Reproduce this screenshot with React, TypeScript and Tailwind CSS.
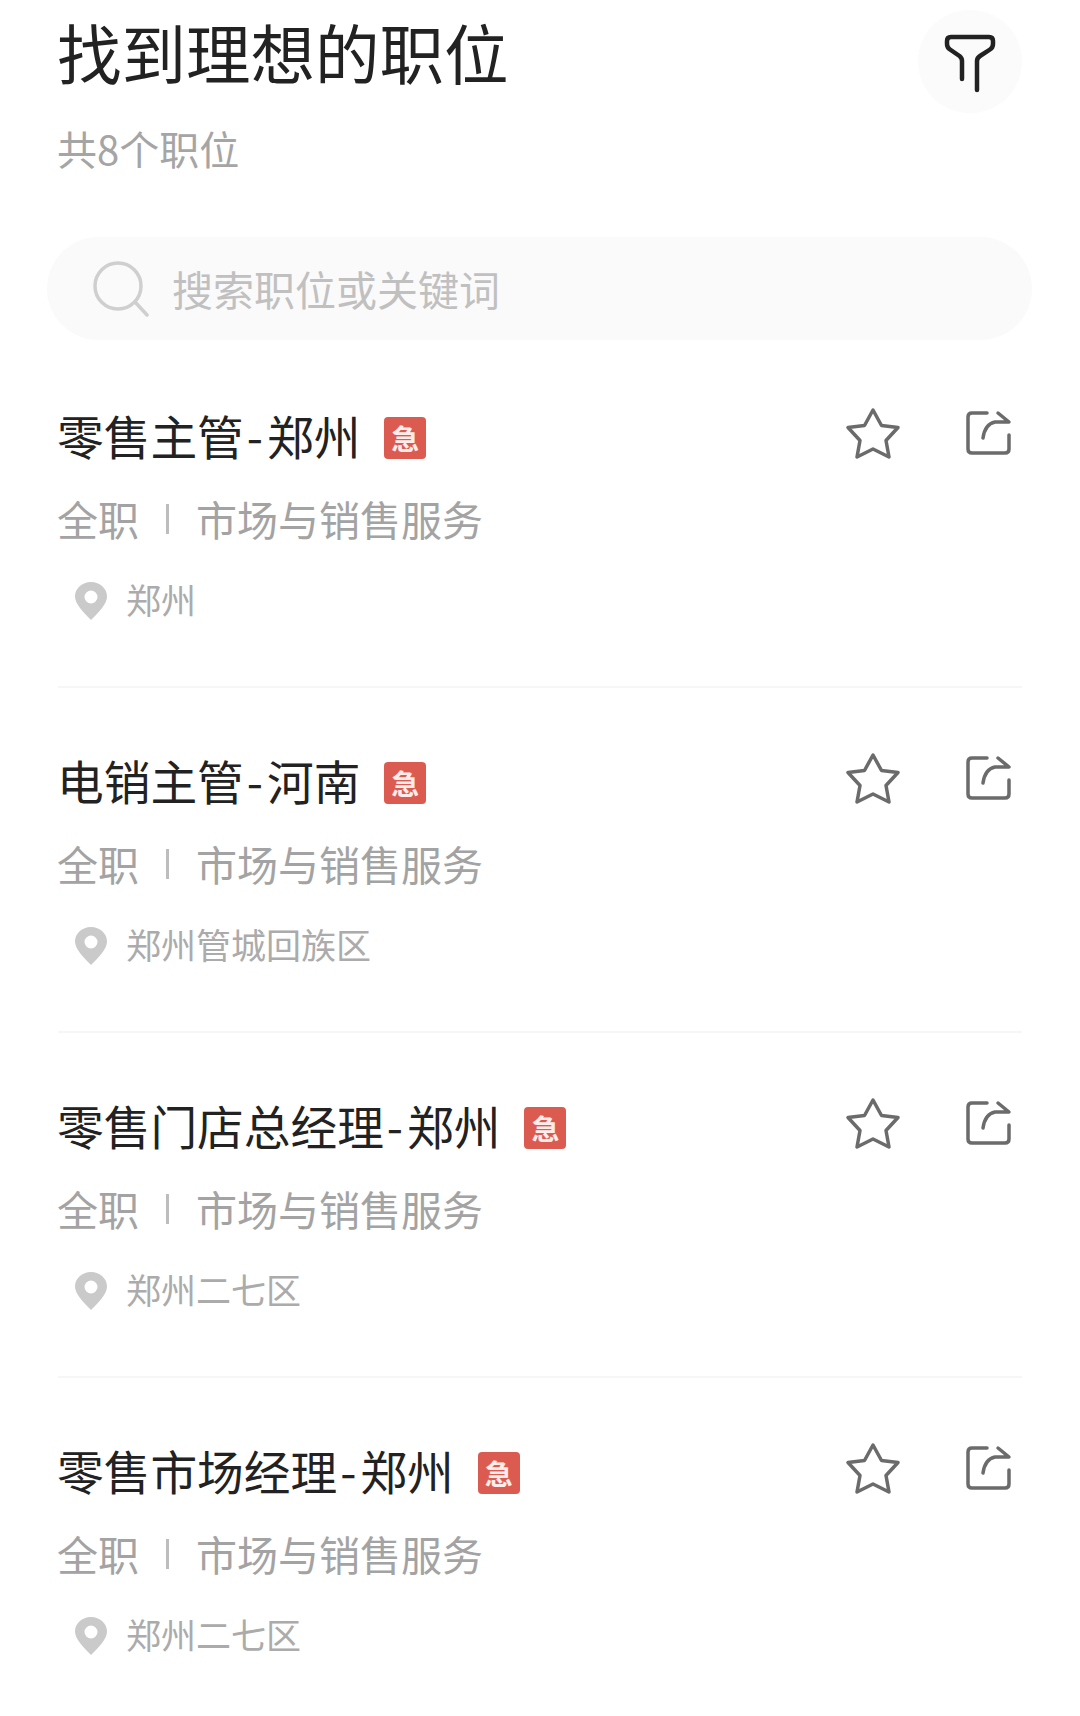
import React from 'react';

interface Job {
  title: string;
  place: string;
  location: string;
}

const jobs: Job[] = [
  { title: '零售主管', place: '郑州', location: '郑州' },
  { title: '电销主管', place: '河南', location: '郑州管城回族区' },
  { title: '零售门店总经理', place: '郑州', location: '郑州二七区' },
  { title: '零售市场经理', place: '郑州', location: '郑州二七区' },
];

const FilterIcon = () => (
  <svg width="52" height="60" viewBox="0 0 52 60" fill="none" stroke="#222" strokeWidth="4.5" strokeLinecap="round" strokeLinejoin="round">
    <path d="M18 46V28Q18 25 15.5 23L6 16.5Q3 14.5 3 11V8Q3 4 7 4H45Q49 4 49 8V11Q49 14.5 46 16.5L36 23Q33 25 33 28V57" />
  </svg>
);

const SearchIcon = () => (
  <svg width="56" height="56" viewBox="0 0 56 56" fill="none" stroke="#cfcfcf" strokeWidth="3.5" strokeLinecap="round">
    <circle cx="25" cy="25" r="23" />
    <path d="M43 42L54 54" />
  </svg>
);

const StarIcon = () => (
  <svg width="58" height="54" viewBox="0 0 58 54" fill="none" stroke="#6b6b6b" strokeWidth="3.5" strokeLinejoin="round">
    <path d="M29 4L37.5 19.5L54 21.5L42 34.5L45 51L29 43L13 51L16 34.5L4 21.5L20.5 19.5Z" />
  </svg>
);

const ShareIcon = () => (
  <svg width="48" height="48" viewBox="0 0 48 48" fill="none" stroke="#6b6b6b" strokeWidth="3.5" strokeLinecap="round" strokeLinejoin="round">
    <path d="M22 3H7Q3 3 3 7V39Q3 43 7 43H40Q44 43 44 39V25" />
    <path d="M33 3L44 12L30 12Q20 14 18 28" />
  </svg>
);

const PinIcon = () => (
  <svg width="36" height="42" viewBox="0 -1 36 42">
    <path
      fillRule="evenodd"
      fill="#cacaca"
      d="M18 3C9 3 2 9.5 2 17.5C2 25 10 33 18 41C26 33 34 25 34 17.5C34 9.5 27 3 18 3ZM18 11.5A6.5 6.5 0 1 1 18 24.5A6.5 6.5 0 1 1 18 11.5Z"
    />
  </svg>
);

const JobRow: React.FC<{ job: Job }> = ({ job }) => (
  <article className="mx-[58px] h-[345px] flex justify-between items-start border-b-2 border-[#f6f6f6]">
    <div className="pt-[67px] -ml-px">
      <div className="flex items-center h-[50px]">
        <h3 className="text-[46.7px] leading-[50px] font-normal text-[#222222]">
          {job.title}
          <span className="ml-[3px] mr-[4px]">-</span>
          {job.place}
        </h3>
        <span className="ml-[24px] mt-[6px] w-[42px] h-[42px] rounded-[4px] bg-[#dc5b50] flex items-center justify-center text-[28px] font-bold text-[#fdecea]">
          急
        </span>
      </div>
      <div className="mt-[37px] h-[44px] flex items-center text-[41px] text-[#a3a3a3]">
        <span>全职</span>
        <span className="ml-[27px] mr-[27px] w-[3px] h-[30px] bg-[#bdbdbd]" />
        <span>市场与销售服务</span>
      </div>
      <div className="mt-[38px] h-[40px] pl-[16px] flex items-center gap-[17px] text-[35px] text-[#ababab]">
        <PinIcon />
        <span>{job.location}</span>
      </div>
    </div>
    <div className="pt-[63px] pr-[9px] flex items-start gap-[63px]">
      <StarIcon />
      <div className="pt-[4px]">
        <ShareIcon />
      </div>
    </div>
  </article>
);

export default function App() {
  return (
    <div className="w-[1080px] h-[1716px] overflow-hidden bg-white font-['Noto_Sans_CJK_SC','Noto_Sans',sans-serif]">
      <header className="h-[236px] px-[58px] pt-2 flex justify-between items-start">
        <div className="pt-[11px] -ml-px">
          <h1 className="text-[64.5px] leading-[65px] font-normal text-[#222222]">找到理想的职位</h1>
          <p className="mt-[43px] text-[40px] leading-[42px] text-[#a5a5a5]">共8个职位</p>
        </div>
        <button className="mt-[2px] pt-[3px] w-[104px] h-[103px] rounded-full bg-[#fbfbfb] flex items-center justify-center">
          <FilterIcon />
        </button>
      </header>

      <div className="ml-[47px] mr-[48px] mt-px mb-[3px] h-[103px] rounded-full bg-[#fafafa] flex items-center pl-[46px] gap-[23px]">
        <SearchIcon />
        <span className="text-[41px] text-[#c0c0c0]">搜索职位或关键词</span>
      </div>

      {jobs.map((job) => (
        <JobRow key={job.title} job={job} />
      ))}
    </div>
  );
}
